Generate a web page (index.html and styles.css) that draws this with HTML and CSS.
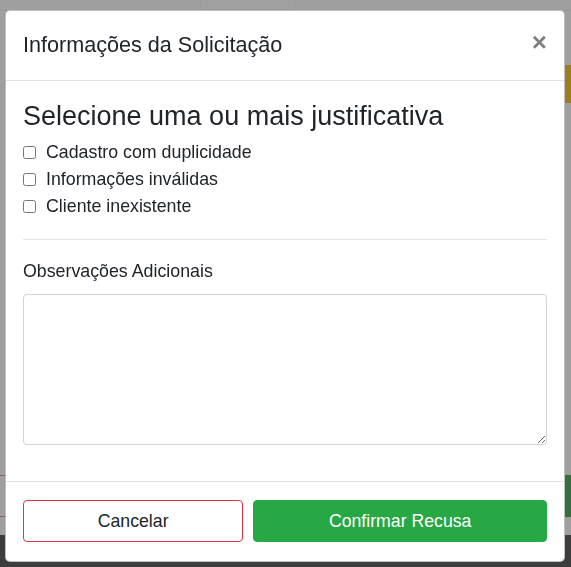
FILE: index.html
```html
<!DOCTYPE html>
<html lang="pt-BR">
<head>
<meta charset="utf-8">
<title>Informações da Solicitação</title>
<link rel="stylesheet" href="styles.css">
</head>
<body>
<div class="page">
  <div class="page-top"><div class="page-tab"></div></div>
  <div class="page-gap-a"></div>
  <div class="page-row-yellow"><div class="yellow-block"></div></div>
  <div class="page-gap-b"></div>
  <div class="page-row-buttons"><div class="red-box"></div><div class="green-block"></div></div>
  <div class="page-gap-c"></div>
  <div class="page-footer"></div>
</div>

<div class="overlay">
  <div class="modal">
    <div class="modal-header">
      <h5 class="modal-title">Informações da Solicitação</h5>
      <button class="close" type="button" aria-label="Fechar">&times;</button>
    </div>
    <div class="modal-body">
      <h3 class="heading">Selecione uma ou mais justificativa</h3>
      <label class="check"><input type="checkbox"> <span>Cadastro com duplicidade</span></label>
      <label class="check"><input type="checkbox"> <span>Informações inválidas</span></label>
      <label class="check"><input type="checkbox"> <span>Cliente inexistente</span></label>
      <hr class="divider">
      <label class="obs-label" for="obs">Observações Adicionais</label>
      <textarea id="obs" class="obs"></textarea>
    </div>
    <div class="modal-footer">
      <button class="btn btn-cancel" type="button">Cancelar</button>
      <button class="btn btn-confirm" type="button">Confirmar Recusa</button>
    </div>
  </div>
</div>
</body>
</html>
```

FILE: styles.css
```css
* { box-sizing: border-box; }

html, body {
  margin: 0;
  height: 567px;
  overflow: hidden;
}

body {
  font-family: "Liberation Sans", Arial, sans-serif;
  color: #212529;
  background: #9f9f9f;
}

/* dimmed page behind the modal */
.page {
  height: 567px;
  display: flex;
  flex-direction: column;
}
.page-top {
  height: 10px;
  display: flex;
  padding-left: 200px;
}
.page-tab {
  width: 95px;
  height: 10px;
  border: 1px solid #999;
  border-top: 0;
  border-radius: 0 0 4px 4px;
  background: #a0a0a0;
}
.page-gap-a { height: 55px; border-top: 1px solid #989898; }
.page-row-yellow {
  height: 38px;
  display: flex;
  justify-content: flex-end;
}
.yellow-block { width: 40px; background: #9d7d22; }
.page-gap-b { height: 372px; }
.page-row-buttons {
  height: 42px;
  display: flex;
  justify-content: space-between;
}
.red-box {
  width: 60px;
  border-top: 1px solid #a65353;
  border-bottom: 1px solid #a65353;
}
.green-block { width: 40px; background: #34703f; }
.page-gap-c { height: 18px; }
.page-footer { flex: 1; background: #3d3d3d; }

/* modal */
.overlay {
  position: fixed;
  inset: 0;
  padding: 10px 6px 0 5px;
}
.modal {
  background: #fff;
  border: 1px solid rgba(0, 0, 0, 0.25);
  border-radius: 5px;
}

.modal-header {
  display: flex;
  align-items: flex-start;
  padding: 19px 16px 20px 17px;
  border-bottom: 1px solid #dee2e6;
}
.modal-title {
  margin: 0;
  font-size: 21.6px;
  line-height: 30px;
  font-weight: 400;
}
.close {
  margin-left: auto;
  margin-top: 0;
  padding: 0;
  border: 0;
  background: none;
  font-family: "Liberation Sans", Arial, sans-serif;
  font-size: 26px;
  line-height: 24px;
  font-weight: 700;
  color: #000;
  opacity: 0.5;
  text-shadow: 0 1px 0 #fff;
  margin-right: 1px;
}

.modal-body {
  padding: 19px 17px 18px;
  display: flex;
  flex-direction: column;
}
.heading {
  margin: 0 0 7px;
  font-size: 27px;
  line-height: 1.2;
  font-weight: 400;
}
.check {
  display: flex;
  align-items: center;
  gap: 10px;
  font-size: 17.8px;
  line-height: 27px;
}
.check input {
  margin: 0;
  width: 13px;
  height: 13px;
}
.divider {
  width: 100%;
  margin: 19px 0 19px;
  border: 0;
  border-top: 1px solid #e5e5e5;
}
.obs-label {
  font-size: 17.8px;
  line-height: 24px;
  margin-bottom: 11px;
}
.obs {
  height: 151px;
  width: 100%;
  margin-bottom: 18px;
  border: 1px solid #ced4da;
  border-radius: 4px;
  resize: vertical;
  font-family: inherit;
}

.modal-footer {
  display: grid;
  grid-template-columns: 3fr 4fr;
  gap: 10px;
  padding: 18px 17px 19px;
  border-top: 1px solid #dee2e6;
}
.btn {
  height: 42px;
  border-radius: 4px;
  font-family: "Liberation Sans", Arial, sans-serif;
  font-size: 17.7px;
  line-height: 1;
}
.btn-cancel {
  background: #fff;
  color: #212529;
  border: 1px solid #dc3545;
}
.btn-confirm {
  background: #28a745;
  color: #fff;
  border: 1px solid #28a745;
}
```
